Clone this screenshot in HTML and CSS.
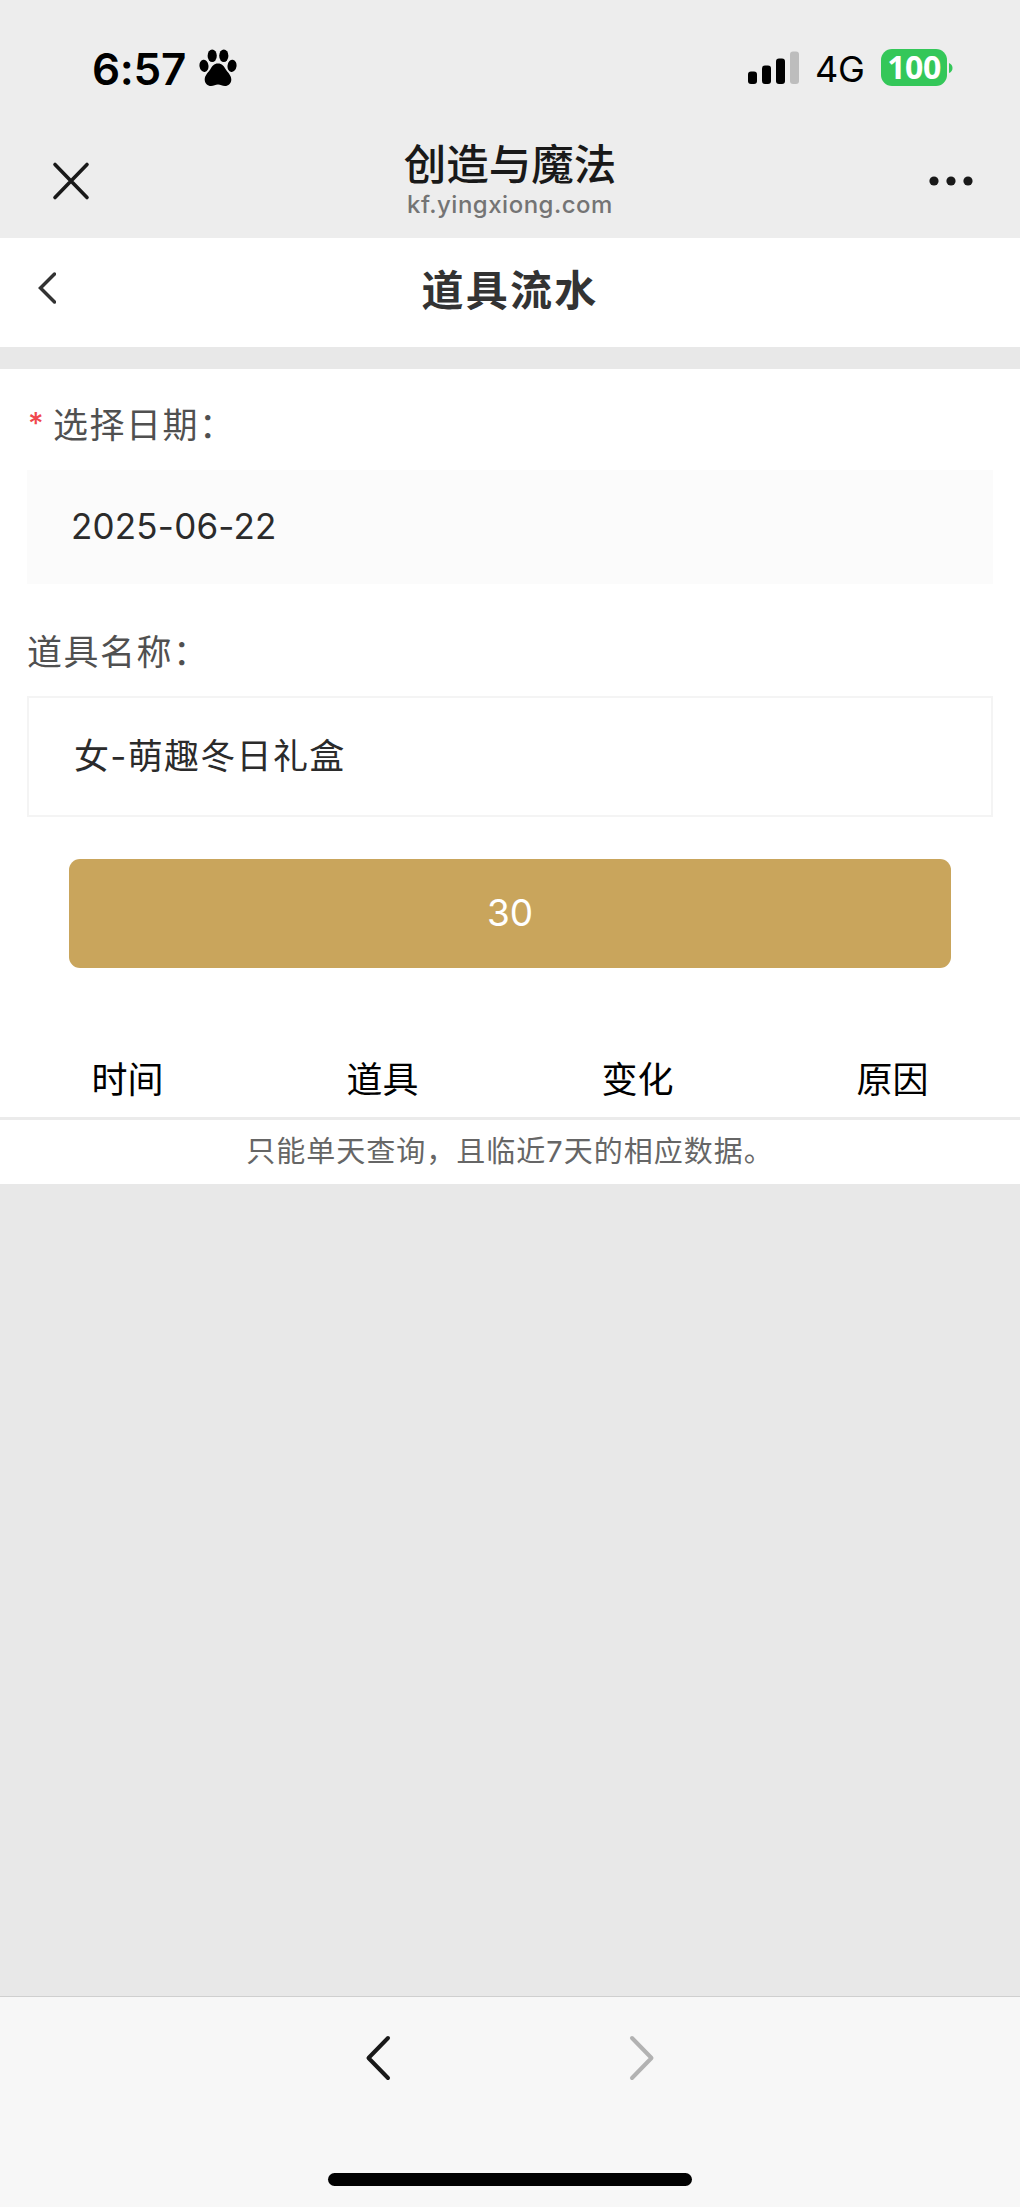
FILE: index.html
```html
<!DOCTYPE html>
<html lang="zh-CN">
<head>
<meta charset="utf-8">
<title>道具流水</title>
<link rel="stylesheet" href="styles.css">
</head>
<body>
<div class="screen">
  <div class="status">
    <span class="clock">6:57</span>
    <svg class="paw" width="38" height="38" viewBox="0 0 38 38"><ellipse cx="5" cy="16.800" rx="4.500" ry="6.200" transform="rotate(-8 5 17)"/><ellipse cx="13.200" cy="6.800" rx="4.600" ry="6.300"/><ellipse cx="24.800" cy="6.800" rx="4.600" ry="6.300"/><ellipse cx="33" cy="16.800" rx="4.500" ry="6.200" transform="rotate(8 33 17)"/><path d="M19 14.500c-4 0-6 2.500-7.500 5.500-1.500 2.800-5.800 6-5.800 10.500 0 4 3 6.500 6.300 6.500 2.800 0 4.500-1.500 7-1.500s4.200 1.500 7 1.500c3.300 0 6.300-2.500 6.300-6.500 0-4.500-4.300-7.700-5.800-10.500-1.500-3-3.500-5.500-7.500-5.500z"/></svg>
    <svg class="signal" width="52" height="34" viewBox="0 0 52 34"><rect x="0" y="20.500" width="9" height="12.500" rx="3"/><rect x="14" y="14.500" width="9" height="18.500" rx="3"/><rect x="28" y="7.500" width="9" height="25.500" rx="3"/><rect x="42" y="0.500" width="9" height="32.500" rx="3" fill="#bdbdbd"/></svg>
    <span class="network">4G</span>
    <span class="battery">100</span>
    <svg class="battery-cap" width="4" height="10" viewBox="0 0 4 10"><path d="M0 0Q3.500 1.500 3.500 5T0 10z" fill="#34c759"/></svg>
  </div>
  <div class="nav">
    <svg class="close" width="40" height="40" viewBox="0 0 40 40"><path d="M4 3.500L36 36.500M36 3.500L4 36.500"/></svg>
    <div class="site">
      <div class="site-name">创造与魔法</div>
      <div class="site-host">kf.yingxiong.com</div>
    </div>
    <svg class="more" width="44" height="10" viewBox="0 0 44 10"><circle cx="5" cy="5" r="4.600"/><circle cx="22" cy="5" r="4.600"/><circle cx="39" cy="5" r="4.600"/></svg>
  </div>
  <header class="page-head">
    <svg class="back" width="18" height="32" viewBox="0 0 18 32"><path d="M16.500 2L2.500 16L16.500 30"/></svg>
    <h1 class="page-title">道具流水</h1>
  </header>
  <main class="panel">
    <div class="label"><span class="required">*</span>选择日期：</div>
    <div class="field date">2025-06-22</div>
    <div class="label label-item">道具名称：</div>
    <div class="field item">女-萌趣冬日礼盒</div>
    <div class="submit">30</div>
    <div class="columns"><span>时间</span><span>道具</span><span>变化</span><span>原因</span></div>
    <div class="note">只能单天查询，且临近7天的相应数据。</div>
  </main>
  <footer class="toolbar">
    <div class="history">
      <svg width="26" height="48" viewBox="0 0 26 48"><path d="M23 4L3.500 24L23 44" stroke="#191919"/></svg>
      <svg width="26" height="48" viewBox="0 0 26 48"><path d="M3 4L22.500 24L3 44" stroke="#b2b2b2"/></svg>
    </div>
    <div class="home-bar"></div>
  </footer>
</div>
</body>
</html>
```
FILE: styles.css
```css
* { box-sizing: border-box; }
body { margin: 0; font-family: Inter, "Noto Sans CJK SC", sans-serif; }
svg { display: block; flex: none; }
.screen { width: 1020px; height: 2207px; display: flex; flex-direction: column; background: #e8e8e8; }

.status { height: 134px; padding: 1px 67px 0 92px; display: flex; align-items: center; background: #ededed; flex: none; }
.clock { width: 107px; padding-top: 2px; font-size: 44px; font-weight: 600; line-height: 56px; letter-spacing: -.3px; white-space: nowrap; }
.signal { margin-left: auto; }
.network { margin-left: 15px; width: 52px; padding-top: 3px; font-size: 36px; line-height: 46px; letter-spacing: -.3px; white-space: nowrap; }
.battery { margin-left: 14px; width: 66px; height: 37px; border-radius: 11px; background: #34c759; color: #fff; font-family: "Open Sans", sans-serif; font-size: 32px; font-weight: 700; line-height: 36px; letter-spacing: -.5px; text-align: center; }
.battery-cap { margin-left: 2px; }

.nav { height: 104px; padding: 0 47px 0 51px; display: flex; justify-content: space-between; background: #ededed; flex: none; }
.close { margin-top: 27px; fill: none; stroke: #191919; stroke-width: 3.600; stroke-linecap: round; }
.site { text-align: center; }
.site-name { margin-top: 4px; height: 53px; font-size: 42.500px; font-weight: 500; line-height: 54px; color: #191919; }
.site-host { height: 28px; font-size: 24px; font-weight: 500; line-height: 28px; letter-spacing: .5px; color: #747474; }
.more { margin-top: 42px; fill: #191919; }

.page-head { height: 109px; padding-left: 38px; display: flex; background: #fff; flex: none; }
.back { margin-top: 34px; fill: none; stroke: #333; stroke-width: 3.500; stroke-linecap: round; }
.page-title { flex: 1; margin: 22px 56px 0 0; font-size: 42px; font-weight: 600; line-height: 62px; letter-spacing: 2.300px; text-align: center; color: #333; }

.panel { height: 815px; margin-top: 22px; padding: 31px 27px 0; background: #fff; flex: none; }
.label { height: 50px; font-size: 35px; line-height: 50px; letter-spacing: 1.500px; color: #505050; }
.label-item { margin-top: 43px; }
.required { display: inline-block; width: 26px; padding-left: 1px; color: #f0474d; font-size: 30px; font-weight: 500; line-height: 30px; vertical-align: 4px; }
.field { color: #2b2b2b; font-size: 35px; }
.date { height: 114px; margin-top: 20px; padding-left: 44px; background: #fbfbfb; line-height: 112px; letter-spacing: .2px; }
.item { height: 121px; margin-top: 19px; padding-left: 45px; border: 2px solid #f4f4f4; line-height: 116px; letter-spacing: 1.300px; }
.submit { height: 109px; margin: 42px 42px 0; border-radius: 11px; background: #c9a55c; color: #fff; font-size: 37px; line-height: 107px; text-align: center; }
.columns { height: 68px; margin: 84px -27px 0; display: grid; grid-template-columns: repeat(4, 255px); border-bottom: 3px solid #ebebeb; color: #000; font-size: 36px; line-height: 56px; text-align: center; }
.note { height: 62px; font-size: 29px; line-height: 64px; letter-spacing: 1px; text-align: center; color: #666; }

.toolbar { margin-top: auto; height: 211px; padding-top: 37px; border-top: 1px solid #cfcfcf; background: #f7f7f7; }
.history { display: flex; justify-content: center; gap: 238px; fill: none; stroke-width: 4; stroke-linecap: round; stroke-linejoin: round; }
.home-bar { width: 364px; height: 13px; margin: 91px auto 0; border-radius: 7px; background: #000; }
```
